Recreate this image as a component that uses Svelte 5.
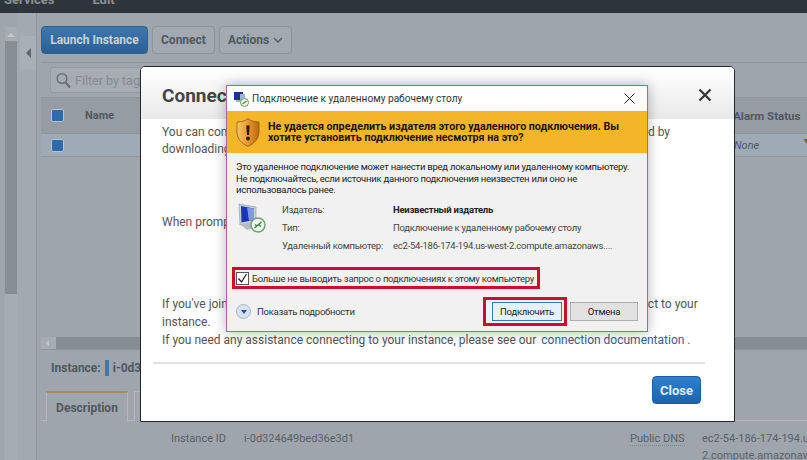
<script>
  const details = [
    ['Издатель:', 'Неизвестный издатель'],
    ['Тип:', 'Подключение к удаленному рабочему столу'],
    ['Удаленный компьютер:', 'ec2-54-186-174-194.us-west-2.compute.amazonaws....']
  ];
</script>

<div class="page">
  <header class="topbar">
    <span>Services</span>
    <span class="edit">Edit</span>
  </header>

  <div class="main">
    <div class="rail">
      <div class="scroll">
        <span class="up"></span>
        <div class="thumb"></div>
      </div>
      <div class="collapse"><span class="tri"></span></div>
    </div>

    <div class="content">
      <div class="toolbar">
        <button class="btn primary">Launch Instance</button>
        <button class="btn">Connect</button>
        <button class="btn">Actions <svg width="10" height="6" viewBox="0 0 10 6"><path d="M1 1l4 4 4-4" fill="none" stroke="#59626c" stroke-width="1.6"/></svg></button>
      </div>

      <div class="filter">
        <div class="search">
          <svg width="15" height="16" viewBox="0 0 15 16"><circle cx="6" cy="6.500" r="4.800" fill="none" stroke="#67707a" stroke-width="1.6"/><path d="M9.500 10.500l4.500 5" stroke="#67707a" stroke-width="2.200"/></svg>
          <span>Filter by tags and attributes</span>
        </div>
      </div>

      <div class="thead">
        <span class="check"></span>
        <span class="name">Name</span>
        <span class="alarm">Alarm Status</span>
      </div>
      <div class="trow">
        <span class="check"></span>
        <em>None</em>
        <span class="warn"></span>
      </div>

      <div class="spacer"></div>

      <div class="hscroll"><span class="left"></span><div class="hthumb"></div></div>
      <div class="instance">Instance: <span class="mark"></span> i-0d324649bed36e3d1</div>
      <div class="tabs">
        <div class="tab">Description</div>
        <div class="tab other"></div>
      </div>
      <div class="info">
        <span class="key">Instance ID</span>
        <span class="val">i-0d324649bed36e3d1</span>
        <span class="key dns">Public DNS</span>
        <span class="val dnsval">ec2-54-186-174-194.us-west-<br />2.compute.amazonaws.com</span>
      </div>
    </div>
  </div>

  <section class="modal">
    <div class="modal-head">
      <h2>Connect To Your Instance</h2>
      <svg class="x" width="14" height="14" viewBox="0 0 14 14"><path d="M1.500 1.500l11 11M12.500 1.500l-11 11" stroke="#333" stroke-width="2.200"/></svg>
    </div>
    <div class="modal-body">
      <p>You can connect to your Windows instance using a remote desktop client of your choice, and by</p>
      <p class="l2">downloading and running the RDP shortcut file below:</p>
      <p class="l3">When prompted, connect to your instance using the following details:</p>
      <p class="l4">If you've joined your instance to your domain, you can use your domain credentials to connect to your<br />instance.<br />If you need any assistance connecting to your instance, please see our <a href="#doc">connection documentation</a> .</p>
    </div>
    <div class="modal-foot"><button class="close">Close</button></div>
  </section>

  <section class="dialog">
    <div class="dtitle">
      <svg class="rdp" width="16" height="16" viewBox="0 0 16 16">
        <rect x="1" y="1" width="9" height="8" fill="#1c2f9c"/>
        <rect x="7" y="3" width="5" height="6" fill="#9db6d8"/>
        <rect x="3" y="9" width="7" height="2" fill="#aab2bc"/>
        <circle cx="11.500" cy="11.500" r="4" fill="#f4f8f2" stroke="#5f9a5f"/>
        <path d="M9.500 13l4-3" stroke="#3d8a3d" stroke-width="1.200"/>
      </svg>
      <span>Подключение к удаленному рабочему столу</span>
      <svg class="dx" width="11" height="11" viewBox="0 0 11 11"><path d="M.5.5l10 10M10.500.5l-10 10" stroke="#222" stroke-width="1"/></svg>
    </div>

    <div class="band">
      <svg width="24" height="31" viewBox="0 0 24 30">
        <defs>
          <linearGradient id="sh" x1="0" x2="1">
            <stop offset="0" stop-color="#f7c765"/>
            <stop offset=".5" stop-color="#e9962c"/>
            <stop offset="1" stop-color="#b9690f"/>
          </linearGradient>
        </defs>
        <path d="M12 1c3 2.500 7 3.500 11 3.500v10c0 7-5 11.500-11 14.500C6 26 1 21.500 1 14.500v-10C5 4.500 9 3.500 12 1z" fill="url(#sh)" stroke="#8b5a1c" stroke-width=".8"/>
        <path d="M10.300 8h3.400l-.7 9.500h-2z" fill="#2a1a05"/>
        <circle cx="12" cy="21" r="1.900" fill="#2a1a05"/>
      </svg>
      <strong>Не удается определить издателя этого удаленного подключения. Вы<br />хотите установить подключение несмотря на это?</strong>
    </div>

    <div class="dbody">
      <p class="warning">Это удаленное подключение может нанести вред локальному или удаленному компьютеру.<br />Не подключайтесь, если источник данного подключения неизвестен или оно не<br />использовалось ранее.</p>

      <div class="meta">
        <svg class="pc" width="28" height="34" viewBox="0 0 28 34">
          <path d="M1 3l17 3v15L2 24z" fill="#c8d2de" stroke="#8a95a3" stroke-width=".6"/>
          <path d="M3 5l13 2.500V19L3.500 21.500z" fill="#1b34b8"/>
          <path d="M9 6.500l7 1V19l-5 1z" fill="#7f9bd8"/>
          <path d="M3 24l13-3 5 4-12 4z" fill="#b5bcc6"/>
          <circle cx="20" cy="24" r="7" fill="#eef5ec" stroke="#6f9f75" stroke-width="1.400"/>
          <path d="M16.500 27l7-6M17 23.500l2 1.500M21 24l2 1.500" stroke="#2f7f3a" stroke-width="1.200" fill="none"/>
        </svg>
        <dl>
          {#each details as [label, value], i}
            <dt>{label}</dt>
            <dd class:bold={i === 0}>{value}</dd>
          {/each}
        </dl>
      </div>

      <div class="remember">
        <span class="box"><svg width="11" height="11" viewBox="0 0 11 11"><path d="M1.500 5.500l3 3.500 5-8" fill="none" stroke="#222" stroke-width="1.300"/></svg></span>
        <span>Больше не выводить запрос о подключениях к этому компьютеру</span>
      </div>

      <div class="dfoot">
        <span class="more"><span class="circle"><span></span></span>Показать подробности</span>
        <div class="actions">
          <span class="ring"><button class="wbtn focus">Подключить</button></span>
          <button class="wbtn">Отмена</button>
        </div>
      </div>
    </div>
  </section>
</div>

<style>
  :global(body) {
    margin: 0;
    background: #9ea5ad;
  }

  button {
    font-family: inherit;
  }

  .page {
    position: relative;
    width: 807px;
    height: 460px;
    overflow: hidden;
    display: flex;
    flex-direction: column;
    background: #9ea5ad;
    font-family: Roboto, "Liberation Sans", sans-serif;
    color: #50585f;
  }

  .topbar {
    height: 13px;
    flex: none;
    background: #2e343b;
    color: #8b9096;
    font-size: 13px;
    font-weight: 700;
    line-height: 0;
    padding-left: 4px;
    display: flex;
    gap: 38px;
    box-sizing: border-box;
    overflow: hidden;
  }

  .main {
    flex: 1;
    display: flex;
    min-height: 0;
  }

  .rail {
    width: 36px;
    flex: none;
    display: flex;
    padding-left: 5px;
    box-sizing: border-box;
    background: linear-gradient(90deg, #9ea5ad 17px, #a3a9b0 17px);
  }

  .scroll {
    width: 12px;
    margin-top: 14px;
    background: #a6acb3;
    display: flex;
    flex-direction: column;
    align-items: center;
    height: 447px;
  }

  .up {
    margin-top: 6px;
    border: 4px solid transparent;
    border-top: 0;
    border-bottom: 4px solid #c3c8cd;
  }

  .thumb {
    width: 100%;
    height: 253px;
    margin-top: 4px;
    background: #878d94;
  }

  .collapse {
    width: 16px;
    height: 33px;
    margin: 23px 0 0 3px;
    background: #a9afb6;
    border-radius: 3px 0 0 3px;
    display: flex;
    align-items: center;
    justify-content: center;
  }

  .tri {
    border: 5px solid transparent;
    border-left: 0;
    border-right: 5px solid #5f666d;
  }

  .content {
    flex: 1;
    min-width: 0;
    display: flex;
    flex-direction: column;
    padding-left: 4px;
    border-left: 1px solid #8f959c;
  }

  .toolbar {
    display: flex;
    gap: 4px;
    margin-top: 13px;
  }

  .btn {
    height: 28px;
    padding: 0 8px;
    border: 1px solid #8d949b;
    border-radius: 4px;
    background: #a3a9b0;
    color: #50585f;
    font-size: 12px;
    font-weight: 700;
    display: flex;
    align-items: center;
    gap: 4px;
  }

  .btn.primary {
    width: 107px;
    padding: 0;
    justify-content: center;
    background: linear-gradient(#3f77ad, #2a5f95);
    border-color: #2f628f;
    color: #c7d2dd;
  }

  .filter {
    height: 34px;
    margin-top: 8px;
    border-top: 1px solid #8e949b;
    display: flex;
    align-items: center;
    padding-left: 9px;
  }

  .search {
    height: 26px;
    width: 300px;
    background: #a6acb3;
    border: 1px solid #979da4;
    border-radius: 3px;
    display: flex;
    align-items: center;
    gap: 4px;
    padding-left: 5px;
    color: #848b92;
    font-size: 12.500px;
    box-sizing: border-box;
  }

  .thead {
    height: 36px;
    background: #959ca4;
    display: flex;
    align-items: center;
    padding-left: 10px;
    border-top: 1px solid #8e949b;
    box-sizing: border-box;
    font-size: 11px;
    font-weight: 700;
  }

  .name {
    margin-left: 21px;
  }

  .alarm {
    margin-left: 619px;
    font-size: 11.500px;
    white-space: nowrap;
  }

  .check {
    width: 11px;
    height: 11px;
    background: #2f6ba8;
    border: 1px solid #b6c4d2;
    border-radius: 2px;
    flex: none;
  }

  .trow {
    height: 24px;
    background: #9faab4;
    display: flex;
    align-items: center;
    padding-left: 10px;
    font-size: 11px;
    border-top: 1px solid #8e949b;
    border-bottom: 1px solid #8e949b;
    box-sizing: border-box;
  }

  .trow em {
    margin-left: 670px;
  }

  .warn {
    margin-left: 44px;
    margin-top: -8px;
    border: 4px solid transparent;
    border-top: 5px solid #7d6a2e;
    border-bottom: 0;
  }

  .spacer {
    flex: 1;
  }

  .hscroll {
    height: 12px;
    background: #a6acb3;
    display: flex;
    align-items: center;
    padding-left: 5px;
  }

  .left {
    border: 3px solid transparent;
    border-left: 0;
    border-right: 3px solid #c3c8cd;
  }

  .hthumb {
    flex: 1;
    height: 100%;
    margin-left: 7px;
    background: #878d94;
  }

  .instance {
    height: 42px;
    padding: 0 0 5px 10px;
    display: flex;
    align-items: center;
    gap: 4px;
    font-size: 12px;
    font-weight: 700;
    white-space: nowrap;
    border-top: 1px solid #8e949b;
    box-sizing: border-box;
  }

  .mark {
    width: 4px;
    height: 16px;
    background: #3f78ac;
  }

  .tabs {
    display: flex;
    gap: 6px;
    height: 29px;
    padding-left: 5px;
    border-bottom: 1px solid #b2b7bd;
  }

  .tab {
    width: 80px;
    height: 29px;
    background: #9ea5ad;
    border: 1px solid #b2b7bd;
    border-top: 2px solid #a88c60;
    border-bottom: 0;
    font-size: 12px;
    font-weight: 700;
    display: flex;
    align-items: center;
    justify-content: center;
  }

  .tab.other {
    border-top: 1px solid #b2b7bd;
  }

  .info {
    height: 39px;
    display: grid;
    grid-template-columns: 73px 386px 72px auto;
    padding: 9px 0 0 130px;
    font-size: 11px;
    line-height: 17px;
    color: #5a6168;
    white-space: nowrap;
    box-sizing: border-box;
  }

  .key.dns {
    height: 15px;
    border-bottom: 1px dotted #7f868d;
    margin-right: 17px;
  }

  .modal {
    position: absolute;
    left: 140px;
    top: 66px;
    width: 595px;
    height: 356px;
    box-sizing: border-box;
    background: #fff;
    border: 1px solid #24282c;
    border-radius: 5px 5px 0 0;
    display: flex;
    flex-direction: column;
    overflow: hidden;
  }

  .modal-head {
    height: 52px;
    flex: none;
    background: linear-gradient(#fff, #e9e9e9);
    display: flex;
    align-items: center;
    justify-content: space-between;
    padding: 4px 22px 0 21px;
    box-sizing: border-box;
  }

  h2 {
    margin: 0;
    font-size: 19px;
    font-weight: 700;
    color: #444;
    white-space: nowrap;
  }

  .modal-body {
    flex: 1;
    padding: 4px 21px 0;
    font-size: 12px;
    line-height: 18px;
    color: #555;
    white-space: nowrap;
  }

  p {
    margin: 0;
  }

  .l2 {
    margin-top: -1px;
  }

  .l3 {
    margin-top: 55px;
  }

  .l4 {
    margin-top: 64px;
  }

  a {
    color: #3c5a92;
    text-decoration: none;
    margin-left: 2px;
  }

  .modal-foot {
    height: 59px;
    flex: none;
    margin: 0 29px 0 12px;
    border-top: 2px solid #e3e3e3;
    box-sizing: border-box;
    display: flex;
    justify-content: flex-end;
    padding: 12px 4px 0 0;
  }

  .close {
    width: 49px;
    height: 28px;
    border: 1px solid #1c5fa8;
    border-radius: 4px;
    background: linear-gradient(#2f80cf, #1b63ae);
    color: #e4eef8;
    font-size: 13px;
    font-weight: 700;
  }

  .dialog {
    position: absolute;
    left: 226px;
    top: 85px;
    width: 422px;
    height: 247px;
    box-sizing: border-box;
    border: 1px solid #a06ca0;
    background: #f1f1f1;
    box-shadow: 0 0 12px rgba(0, 0, 0, 0.3);
    color: #222;
    display: flex;
    flex-direction: column;
    font-size: 9.500px;
    letter-spacing: -0.25px;
  }

  .dtitle {
    height: 25px;
    flex: none;
    background: #fff;
    display: flex;
    align-items: center;
    padding: 0 12px 0 6px;
    gap: 3px;
    font-size: 10.100px;
    letter-spacing: 0;
    color: #333;
  }

  .dx {
    margin-left: auto;
  }

  .band {
    height: 42px;
    flex: none;
    background: #f5b52a;
    display: flex;
    align-items: center;
    gap: 8px;
    padding-left: 9px;
    color: #1c1405;
    font-size: 10.700px;
    letter-spacing: 0;
    line-height: 11.500px;
    white-space: nowrap;
  }

  .dbody {
    flex: 1;
    padding: 8px 8px 0 9px;
    display: flex;
    flex-direction: column;
    min-height: 0;
  }

  .warning {
    line-height: 11.500px;
    height: 35px;
    white-space: nowrap;
  }

  .meta {
    display: flex;
    height: 57px;
    margin-top: 1px;
  }

  .pc {
    margin: 4px 0 0 2px;
  }

  dl {
    margin: 7px 0 0 16px;
    display: grid;
    grid-template-columns: 111px auto;
    grid-auto-rows: 18px;
    white-space: nowrap;
    color: #444;
  }

  dd {
    margin: 0;
  }

  .bold {
    font-weight: 700;
    color: #222;
  }

  .remember {
    margin: 13px 0 0 -4px;
    width: 308px;
    height: 22px;
    flex: none;
    box-sizing: border-box;
    border: 3px solid #c8102a;
    display: flex;
    align-items: center;
    gap: 3px;
    padding-left: 1px;
    white-space: nowrap;
    color: #333;
  }

  .box {
    width: 11px;
    height: 11px;
    background: #fff;
    border: 1px solid #555;
    display: flex;
    flex: none;
  }

  .dfoot {
    display: flex;
    align-items: center;
    justify-content: space-between;
    margin-top: 8px;
    height: 29px;
    flex: none;
  }

  .more {
    display: flex;
    align-items: center;
    gap: 6px;
    color: #333;
  }

  .circle {
    width: 13px;
    height: 13px;
    border-radius: 50%;
    background: #d7e1f2;
    border: 1px solid #a9b6cd;
    display: flex;
    align-items: center;
    justify-content: center;
  }

  .circle span {
    border: 3px solid transparent;
    border-top: 4px solid #2f4b9b;
    border-bottom: 0;
  }

  .actions {
    display: flex;
    align-items: center;
    gap: 3px;
    margin-right: 1px;
  }

  .ring {
    border: 3px solid #c8102a;
    padding: 2px 2px 2px 6px;
    display: flex;
    box-sizing: border-box;
  }

  .wbtn {
    width: 68px;
    height: 19px;
    padding: 0;
    background: #e1e1e1;
    border: 1px solid #adadad;
    font-size: 9.500px;
    letter-spacing: -0.25px;
    color: #222;
  }

  .wbtn.focus {
    width: 70px;
    background: #e5f1fb;
    border: 1px solid #2f7fb5;
  }
</style>
